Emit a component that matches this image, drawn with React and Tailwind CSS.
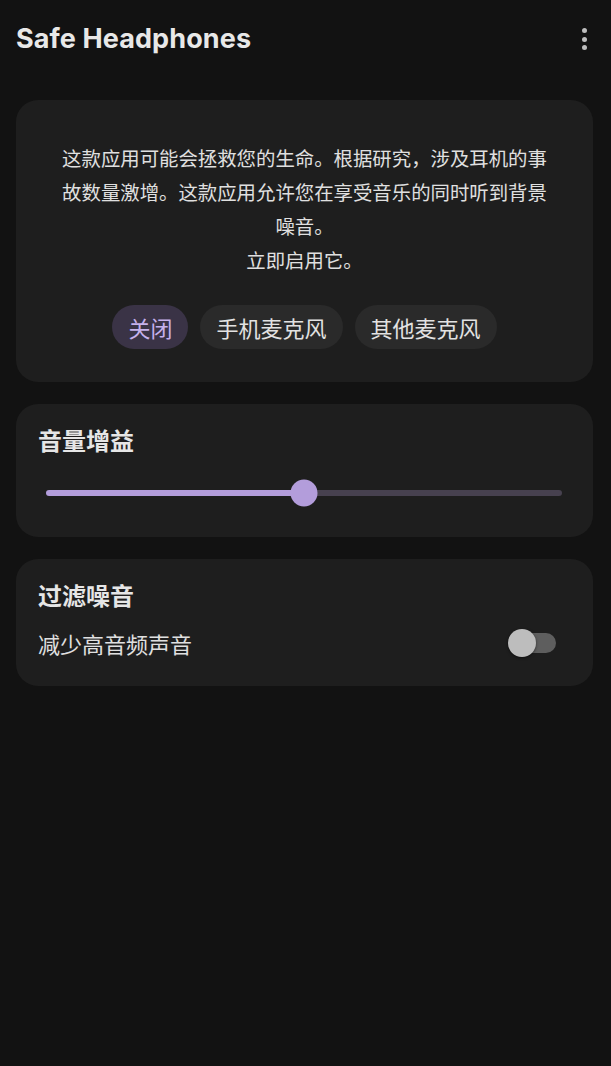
import React from "react";

const cjk = { fontFamily: '"Noto Sans CJK SC", "Noto Sans", sans-serif' };

export default function App() {
  return (
    <div className="min-h-[1066px] w-full bg-[#121212] text-[#e3e3e3]" style={cjk}>
      {/* Header */}
      <div className="flex h-[78px] items-center justify-between pl-4 pr-[24px]">
        <h1
          className="text-[27px] font-bold text-[#e8e8e8] tracking-[0.1px]"
          style={{ fontFamily: '"Inter", "Lato", sans-serif' }}
        >
          Safe Headphones
        </h1>
        <div className="flex flex-col items-center gap-[3.5px]">
          <span className="block h-[5px] w-[5px] rounded-full bg-[#bdbdbd]" />
          <span className="block h-[5px] w-[5px] rounded-full bg-[#bdbdbd]" />
          <span className="block h-[5px] w-[5px] rounded-full bg-[#bdbdbd]" />
        </div>
      </div>

      <div className="flex flex-col gap-[22px] pl-4 pr-[18px] pt-[22px]">
        {/* Card 1 */}
        <div className="rounded-[22px] bg-[#1e1e1e] pt-[41px] pb-[33px]">
          <p className="px-[44px] text-center text-[19.4px] leading-[34px] text-[#e0e0e0]">
            这款应用可能会拯救您的生命。根据研究，涉及耳机的事故数量激增。这款应用允许您在享受音乐的同时听到背景噪音。
            <br />
            立即启用它。
          </p>
          <div className="mt-[28px] flex justify-center gap-3">
            <button className="h-[44px] rounded-full bg-[#3a3346] px-4 text-[22px] text-[#c6b1ec]">
              关闭
            </button>
            <button className="h-[44px] rounded-full bg-[#2a2a2a] px-4 text-[22px] text-[#e2e2e2]">
              手机麦克风
            </button>
            <button className="h-[44px] rounded-full bg-[#2a2a2a] px-4 text-[22px] text-[#e2e2e2]">
              其他麦克风
            </button>
          </div>
        </div>

        {/* Card 2 */}
        <div className="rounded-[22px] bg-[#1e1e1e] px-[22px] pt-[22px] pb-[30px]">
          <h2 className="text-[24px] font-bold leading-[28px] text-[#e6e6e6]">音量增益</h2>
          <div className="relative ml-[8px] mr-[9px] mt-[25px] flex h-7 items-center">
            <div className="flex h-[6px] w-full overflow-hidden rounded-full">
              <div className="h-full w-1/2 bg-[#b39ddb]" />
              <div className="h-full w-1/2 bg-[#47414f]" />
            </div>
            <div className="absolute left-1/2 top-1/2 h-[27px] w-[27px] -translate-x-1/2 -translate-y-1/2 rounded-full bg-[#b39ddb]" />
          </div>
        </div>

        {/* Card 3 */}
        <div className="rounded-[22px] bg-[#1e1e1e] pl-[22px] pr-[37px] pt-[22px] pb-[26px]">
          <h2 className="text-[24px] font-bold leading-[28px] text-[#e6e6e6]">过滤噪音</h2>
          <div className="mt-[17px] flex items-center justify-between">
            <span className="text-[22px] leading-[34px] text-[#e0e0e0]">减少高音频声音</span>
            <div className="relative h-5 w-12 rounded-full bg-[#5e5e5e]">
              <div className="absolute left-0 top-1/2 h-7 w-7 -translate-y-1/2 rounded-full bg-[#bdbdbd] shadow-[0_1px_3px_rgba(0,0,0,0.5)]" />
            </div>
          </div>
        </div>
      </div>
    </div>
  );
}
